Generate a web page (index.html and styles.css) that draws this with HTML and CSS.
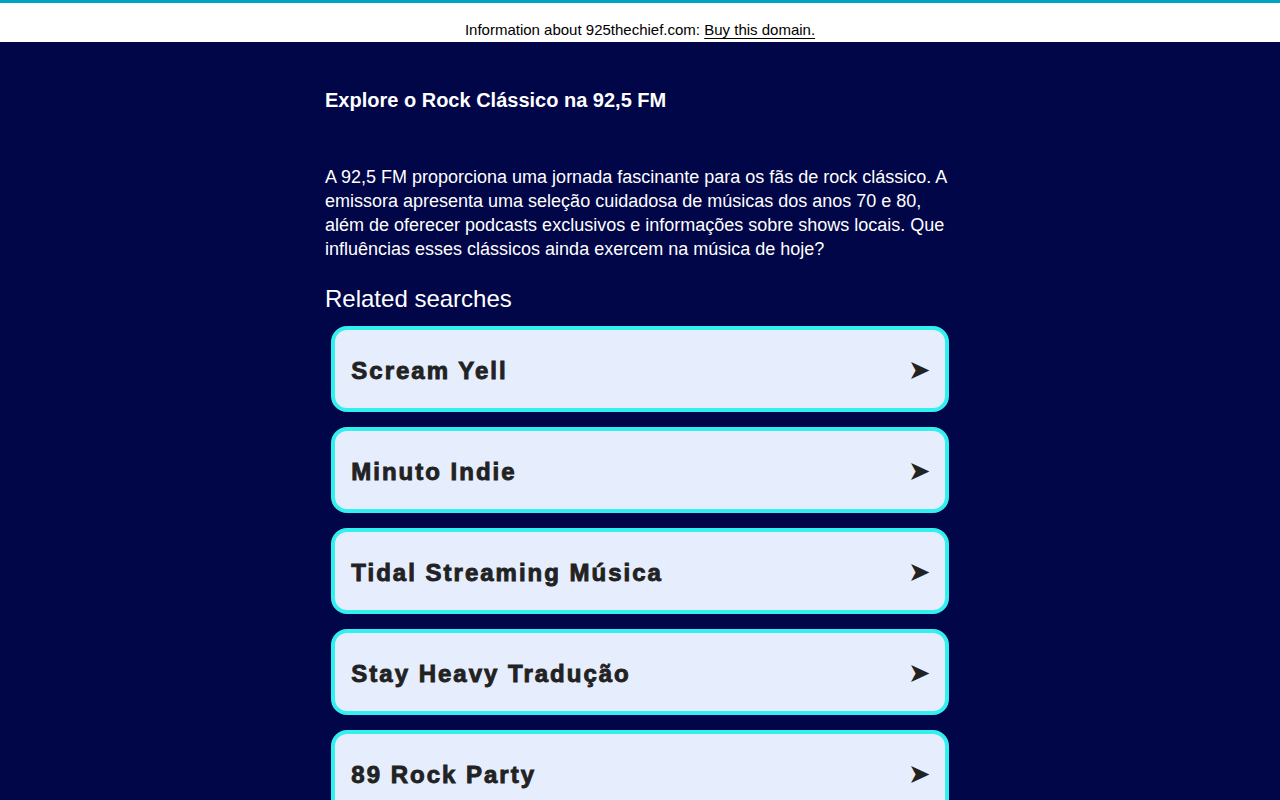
FILE: index.html
```html
<!DOCTYPE html>
<html lang="pt">
<head>
<meta charset="utf-8">
<title>925thechief.com</title>
<link rel="stylesheet" href="styles.css">
</head>
<body>
<div class="topbar">
  <span>Information about 925thechief.com: <a href="#">Buy this domain.</a></span>
</div>
<main class="content">
  <h1 class="title">Explore o Rock Clássico na 92,5 FM</h1>
  <p class="desc">A 92,5 FM proporciona uma jornada fascinante para os fãs de rock clássico. A emissora apresenta uma seleção cuidadosa de músicas dos anos 70 e 80, além de oferecer podcasts exclusivos e informações sobre shows locais. Que influências esses clássicos ainda exercem na música de hoje?</p>
  <h2 class="related">Related searches</h2>
  <ul class="links">
    <li><a class="card" href="#"><span class="label">Scream Yell</span><span class="arrow">➤</span></a></li>
    <li><a class="card" href="#"><span class="label">Minuto Indie</span><span class="arrow">➤</span></a></li>
    <li><a class="card" href="#"><span class="label">Tidal Streaming Música</span><span class="arrow">➤</span></a></li>
    <li><a class="card" href="#"><span class="label">Stay Heavy Tradução</span><span class="arrow">➤</span></a></li>
    <li><a class="card" href="#"><span class="label">89 Rock Party</span><span class="arrow">➤</span></a></li>
  </ul>
</main>
</body>
</html>
```

FILE: styles.css
```css
html, body {
  margin: 0;
  padding: 0;
}
body {
  background: #000648;
  font-family: "Liberation Sans", Arial, sans-serif;
  color: #ffffff;
}
.topbar {
  background: #ffffff;
  border-top: 3px solid #00a3c4;
  height: 39px;
  display: flex;
  justify-content: center;
  align-items: flex-end;
  color: #000000;
  font-size: 15px;
  line-height: 17px;
}
.topbar span {
  padding-bottom: 4px;
}
.topbar a {
  color: #000000;
  text-decoration: underline;
  text-underline-offset: 3px;
}
.content {
  width: 630px;
  margin: 0 auto;
  padding-top: 46px;
}
.title {
  font-size: 20px;
  line-height: 24px;
  font-weight: bold;
  margin: 0 0 53px 0;
}
.desc {
  font-size: 18px;
  line-height: 24px;
  margin: 0 0 24px 0;
}
.related {
  font-size: 24px;
  line-height: 28px;
  font-weight: normal;
  margin: 0 0 13px 0;
}
.links {
  list-style: none;
  margin: 0;
  padding: 0;
}
.links li {
  margin: 0 0 15px 0;
}
.card {
  width: 98%;
  margin: 0 auto;
  box-sizing: border-box;
  height: 86px;
  display: flex;
  align-items: center;
  justify-content: space-between;
  padding: 0 14px 0 16px;
  background: #e6eefe;
  border: 4px solid #33f0f0;
  border-radius: 16px;
  color: #222222;
  text-decoration: none;
}
.label {
  padding-top: 4px;
  font-size: 24px;
  font-weight: bold;
  letter-spacing: 2px;
  -webkit-text-stroke: 0.9px #222222;
}
.arrow {
  font-family: "DejaVu Sans", sans-serif;
  font-size: 27px;
  color: #222222;
}
```
